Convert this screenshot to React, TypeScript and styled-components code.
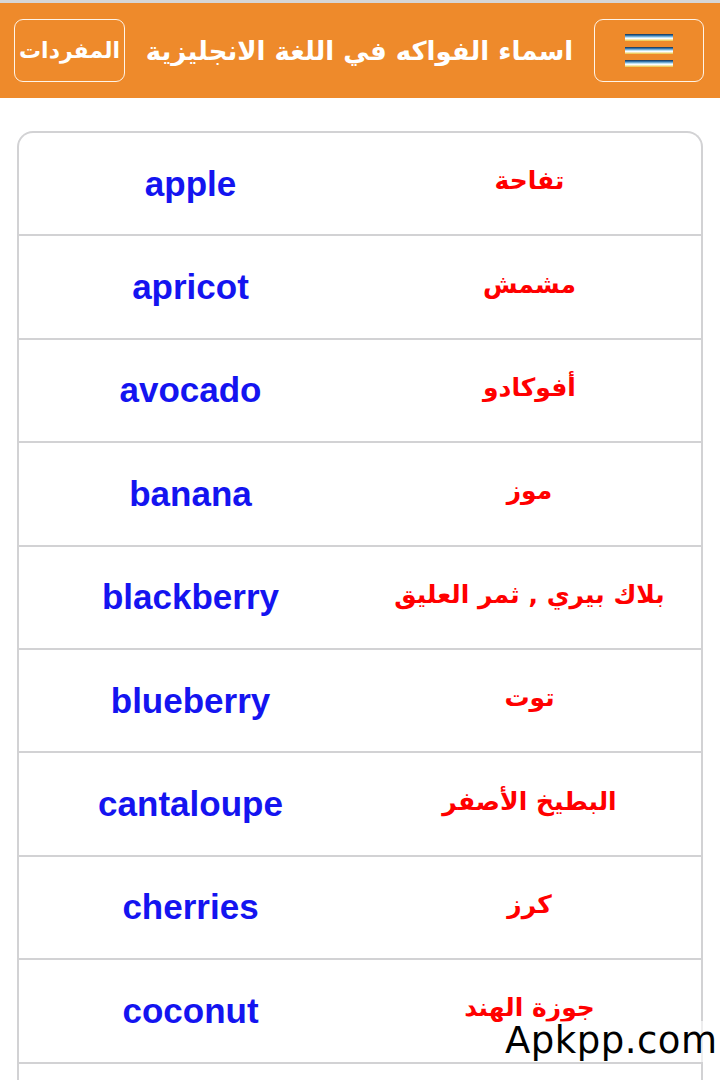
import React from "react";
import styled, { createGlobalStyle } from "styled-components";

const Global = createGlobalStyle`
  html, body { margin: 0; padding: 0; background: #ffffff; }
  body { font-family: "Liberation Sans", Arial, sans-serif; }
  * { box-sizing: border-box; }
`;

const Page = styled.div`
  position: relative;
  width: 720px;
  min-height: 1080px;
  background: #fff;
`;

const Header = styled.header`
  direction: rtl;
  height: 98px;
  border-top: 3px solid #d6d6d6;
  background: #ee8a2b;
  display: flex;
  align-items: center;
  padding: 0 16px 0 14px;
  gap: 16px;
`;

const HeaderButton = styled.button<{ $w: number }>`
  width: ${(p) => p.$w}px;
  height: 63px;
  flex: none;
  background: transparent;
  border: 1.5px solid #fff4e8;
  border-radius: 9px;
  display: flex;
  align-items: center;
  justify-content: center;
  padding: 0;
  color: #fff;
  font-family: "DejaVu Sans", sans-serif;
  font-weight: bold;
  font-size: 22px;
  white-space: nowrap;
  cursor: pointer;
`;

const Bars = styled.span`
  display: flex;
  flex-direction: column;
  gap: 6px;
`;

const Bar = styled.span`
  display: block;
  width: 48px;
  height: 7px;
  background: linear-gradient(
    to bottom,
    #15304f 0%,
    #3a7fb8 25%,
    #bfe3f5 50%,
    #ffffff 65%,
    #e9c23a 100%
  );
`;

const Title = styled.h1`
  flex: 1;
  margin: 0;
  color: #fff;
  font-family: "DejaVu Sans", sans-serif;
  font-weight: bold;
  font-size: 26px;
  text-align: center;
  white-space: nowrap;
  overflow: hidden;
`;

const Card = styled.div`
  margin: 33px 17px 0;
  border: 2px solid #d2d2d4;
  border-bottom: none;
  border-radius: 16px 16px 0 0;
  overflow: hidden;
`;

const Row = styled.div`
  direction: rtl;
  height: 103.4px;
  display: grid;
  grid-template-columns: 1fr 1fr;
  align-items: center;
  border-bottom: 2px solid #d2d2d4;
`;

const Arabic = styled.div`
  text-align: center;
  color: #ff0000;
  font-family: "DejaVu Sans", sans-serif;
  font-weight: bold;
  font-size: 25px;
  padding-bottom: 6px;
  padding-right: 2px;
`;

const English = styled.div`
  direction: ltr;
  text-align: center;
  color: #1414f0;
  font-family: "Liberation Sans", Arial, sans-serif;
  font-weight: bold;
  font-size: 35px;
  padding-left: 2px;
`;

const Watermark = styled.div`
  position: absolute;
  left: 505px;
  top: 1021px;
  font-family: "DejaVu Sans", sans-serif;
  font-size: 37px;
  color: #000;
  letter-spacing: 0.5px;
  background: rgba(255, 255, 255, 0.6);
  line-height: 1.1;
`;

const words: [string, string][] = [
  ["apple", "تفاحة"],
  ["apricot", "مشمش"],
  ["avocado", "أفوكادو"],
  ["banana", "موز"],
  ["blackberry", "بلاك بيري , ثمر العليق"],
  ["blueberry", "توت"],
  ["cantaloupe", "البطيخ الأصفر"],
  ["cherries", "كرز"],
  ["coconut", "جوزة الهند"],
  ["cranberry", "توت بري"],
];

export default function App() {
  return (
    <Page>
      <Global />
      <Header>
        <HeaderButton $w={110} aria-label="menu">
          <Bars>
            <Bar />
            <Bar />
            <Bar />
          </Bars>
        </HeaderButton>
        <Title>اسماء الفواكه في اللغة الانجليزية</Title>
        <HeaderButton $w={111}>المفردات</HeaderButton>
      </Header>
      <Card>
        {words.map(([en, ar]) => (
          <Row key={en}>
            <Arabic>{ar}</Arabic>
            <English>{en}</English>
          </Row>
        ))}
      </Card>
      <Watermark>Apkpp.com</Watermark>
    </Page>
  );
}
